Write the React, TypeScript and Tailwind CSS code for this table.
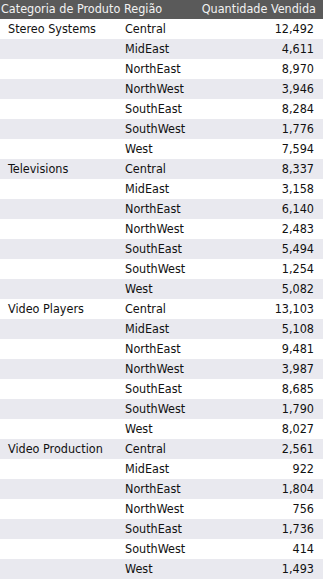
import React from "react";

const data: [string, [string, string][]][] = [
  ["Stereo Systems", [["Central", "12,492"], ["MidEast", "4,611"], ["NorthEast", "8,970"], ["NorthWest", "3,946"], ["SouthEast", "8,284"], ["SouthWest", "1,776"], ["West", "7,594"]]],
  ["Televisions", [["Central", "8,337"], ["MidEast", "3,158"], ["NorthEast", "6,140"], ["NorthWest", "2,483"], ["SouthEast", "5,494"], ["SouthWest", "1,254"], ["West", "5,082"]]],
  ["Video Players", [["Central", "13,103"], ["MidEast", "5,108"], ["NorthEast", "9,481"], ["NorthWest", "3,987"], ["SouthEast", "8,685"], ["SouthWest", "1,790"], ["West", "8,027"]]],
  ["Video Production", [["Central", "2,561"], ["MidEast", "922"], ["NorthEast", "1,804"], ["NorthWest", "756"], ["SouthEast", "1,736"], ["SouthWest", "414"], ["West", "1,493"]]],
];

export default function App() {
  let idx = 0;
  return (
    <div className="w-[323px] h-[579px] bg-white text-[12.5px] text-[#111111]" style={{ fontFamily: '"DejaVu Sans Condensed", "DejaVu Sans", sans-serif' }}>
      <div className="flex h-[19px] items-center bg-[#5a5a5a] text-[#f2f2f2]">
        <div className="w-[124px] pl-[1px] whitespace-nowrap">Categoria de Produto</div>
        <div className="flex-1 whitespace-nowrap">Região</div>
        <div className="pr-[7px] whitespace-nowrap">Quantidade Vendida</div>
      </div>
      {data.map(([cat, rows]) =>
        rows.map(([reg, q], i) => {
          const odd = idx++ % 2 === 1;
          return (
            <div key={cat + reg} className={`flex h-[20px] items-center ${odd ? "bg-[#e9e9ef]" : "bg-white"}`}>
              <div className="w-[124px] pl-[8px] whitespace-nowrap">{i === 0 ? cat : ""}</div>
              <div className="flex-1 pl-[1px] whitespace-nowrap">{reg}</div>
              <div className="pr-[9px] whitespace-nowrap">{q}</div>
            </div>
          );
        })
      )}
    </div>
  );
}
